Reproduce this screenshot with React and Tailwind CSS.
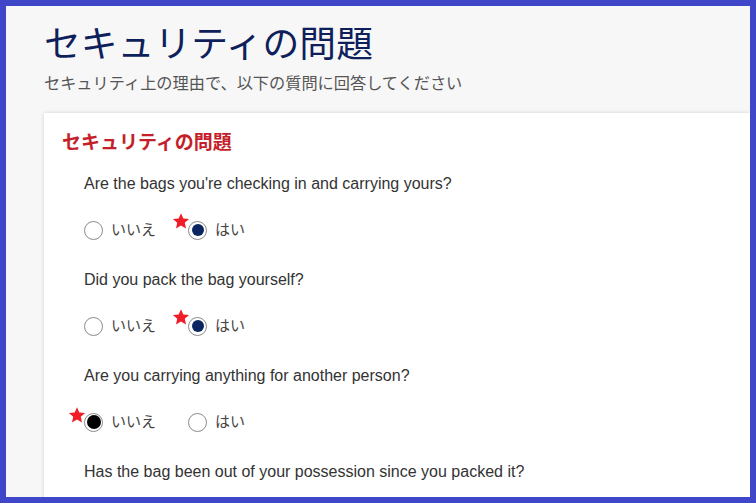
import React from "react";

const questions = [
  { text: "Are the bags you're checking in and carrying yours?", answer: "yes", dark: false },
  { text: "Did you pack the bag yourself?", answer: "yes", dark: false },
  { text: "Are you carrying anything for another person?", answer: "no", dark: true },
  { text: "Has the bag been out of your possession since you packed it?", answer: null, dark: false, last: true },
];

function Star({ dark }) {
  return (
    <svg
      viewBox="0 0 24 24"
      className={
        dark
          ? "absolute left-[-17px] top-[-8px] h-[18px] w-[18px]"
          : "absolute left-[-17px] top-[-10px] h-[18px] w-[18px]"
      }
      aria-hidden
    >
      <path
        d="M12 1.5l3.1 7.1 7.7.7-5.8 5.1 1.7 7.6L12 18l-6.7 4 1.7-7.6-5.8-5.1 7.7-.7z"
        fill="#f01c26"
      />
    </svg>
  );
}

function Radio({ checked, dark }) {
  return (
    <span className="relative flex h-[19px] w-[19px] shrink-0 items-center justify-center rounded-full border-[1.5px] border-[#8a8a8a] bg-white">
      {checked && (
        <span
          className={
            dark
              ? "h-[14px] w-[14px] rounded-full bg-black"
              : "h-[12px] w-[12px] rounded-full bg-[#0b2462]"
          }
        />
      )}
      {checked && <Star dark={dark} />}
    </span>
  );
}

function Option({ label, checked, dark }) {
  return (
    <label className="flex w-[104px] items-center gap-[8px]">
      <Radio checked={checked} dark={dark} />
      <span className="text-[15px] leading-5 text-[#444]">{label}</span>
    </label>
  );
}

export default function App() {
  return (
    <div
      className="h-[503px] w-[756px] overflow-hidden border-[6px] border-[#4046c8] bg-[#f7f7f7]"
      style={{ fontFamily: '"Liberation Sans", "Noto Sans CJK JP", sans-serif' }}
    >
      <div className="flex flex-col pl-[38px] pt-[14px]">
        <h1
          className="text-[36.8px] leading-[43px] text-[#0e1f5c]"
          style={{ fontFamily: '"Noto Sans CJK JP", sans-serif' }}
        >
          セキュリティの問題
        </h1>
        <p
          className="mt-[7px] text-[16.2px] leading-6 text-[#555]"
          style={{ fontFamily: '"Noto Sans CJK JP", sans-serif' }}
        >
          セキュリティ上の理由で、以下の質問に回答してください
        </p>

        <section className="mt-[19px] h-[420px] bg-white pl-[18px] pt-[15px] shadow-[0_0_4px_rgba(0,0,0,0.15)]">
          <h2
            className="text-[19px] font-bold leading-[26px] text-[#c41f2b]"
            style={{ fontFamily: '"Noto Sans CJK JP", sans-serif' }}
          >
            セキュリティの問題
          </h2>
          <div className="flex flex-col pl-[22px] pt-[20px]">
            {questions.map((q, i) => (
              <div key={i} className="flex flex-col">
                <p className="text-[16px] leading-5 text-[#333]">{q.text}</p>
                {!q.last && (
                  <div className="mb-[30px] mt-[26px] flex items-center">
                    <Option label="いいえ" checked={q.answer === "no"} dark={q.dark} />
                    <Option label="はい" checked={q.answer === "yes"} dark={q.dark} />
                  </div>
                )}
              </div>
            ))}
          </div>
        </section>
      </div>
    </div>
  );
}
